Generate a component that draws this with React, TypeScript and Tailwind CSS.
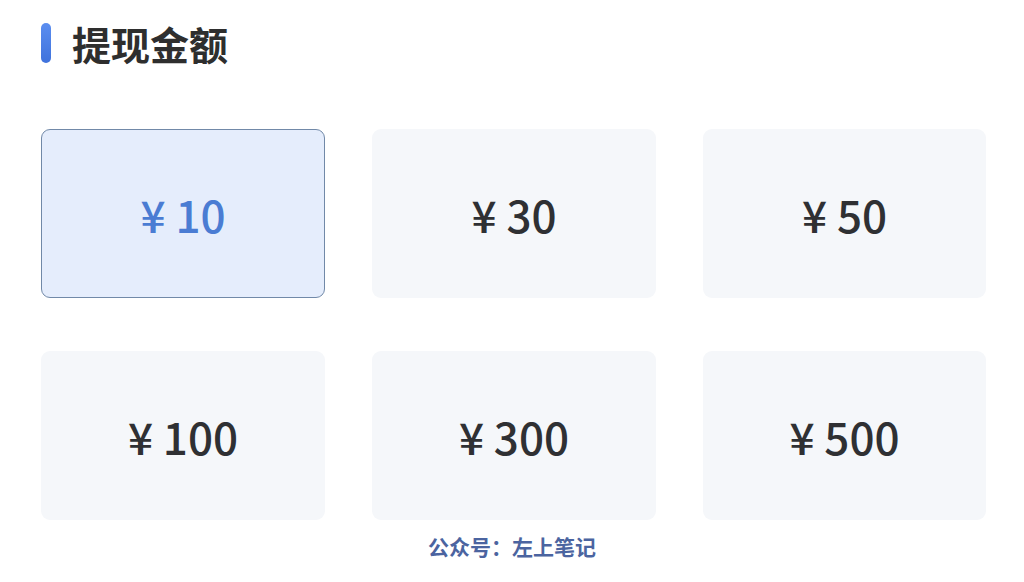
import React from "react";

const amounts = [10, 30, 50, 100, 300, 500];

export default function App() {
  return (
    <div
      className="w-[1024px] h-[582px] bg-white overflow-hidden relative"
      style={{ fontFamily: '"Noto Sans CJK SC", "Noto Sans", sans-serif' }}
    >
      <div className="pl-[41px] pt-[23px] flex items-center gap-[21px]">
        <div className="w-[10px] h-[40px] rounded-full bg-gradient-to-b from-[#5b8ef0] to-[#3f72dc]" />
        <div className="text-[39px] leading-[40px] font-bold text-[#2e2e2e] tracking-[0px]">提现金额</div>
      </div>
      <div className="pl-[41px] pt-[66px] grid grid-cols-[284px_284px_283px] gap-x-[47px] gap-y-[53px] w-[986px]">
        {amounts.map((a, i) => (
          <div
            key={a}
            className={
              i === 0
                ? "h-[169px] rounded-[9px] border-[1.5px] border-[#7189a8] bg-[#e5edfc] flex items-center justify-center"
                : "h-[169px] rounded-[9px] bg-[#f5f7fa] flex items-center justify-center"
            }
          >
            <span
              className={
                i === 0
                  ? "text-[44px] font-medium text-[#4a7cd3] leading-none"
                  : "text-[44px] font-medium text-[#2f3033] leading-none"
              }
            >
              ¥ {a}
            </span>
          </div>
        ))}
      </div>
      <div className="mt-[14px] text-center text-[21px] leading-[24px] font-bold text-[#4b64a0]">
        公众号：左上笔记
      </div>
    </div>
  );
}
